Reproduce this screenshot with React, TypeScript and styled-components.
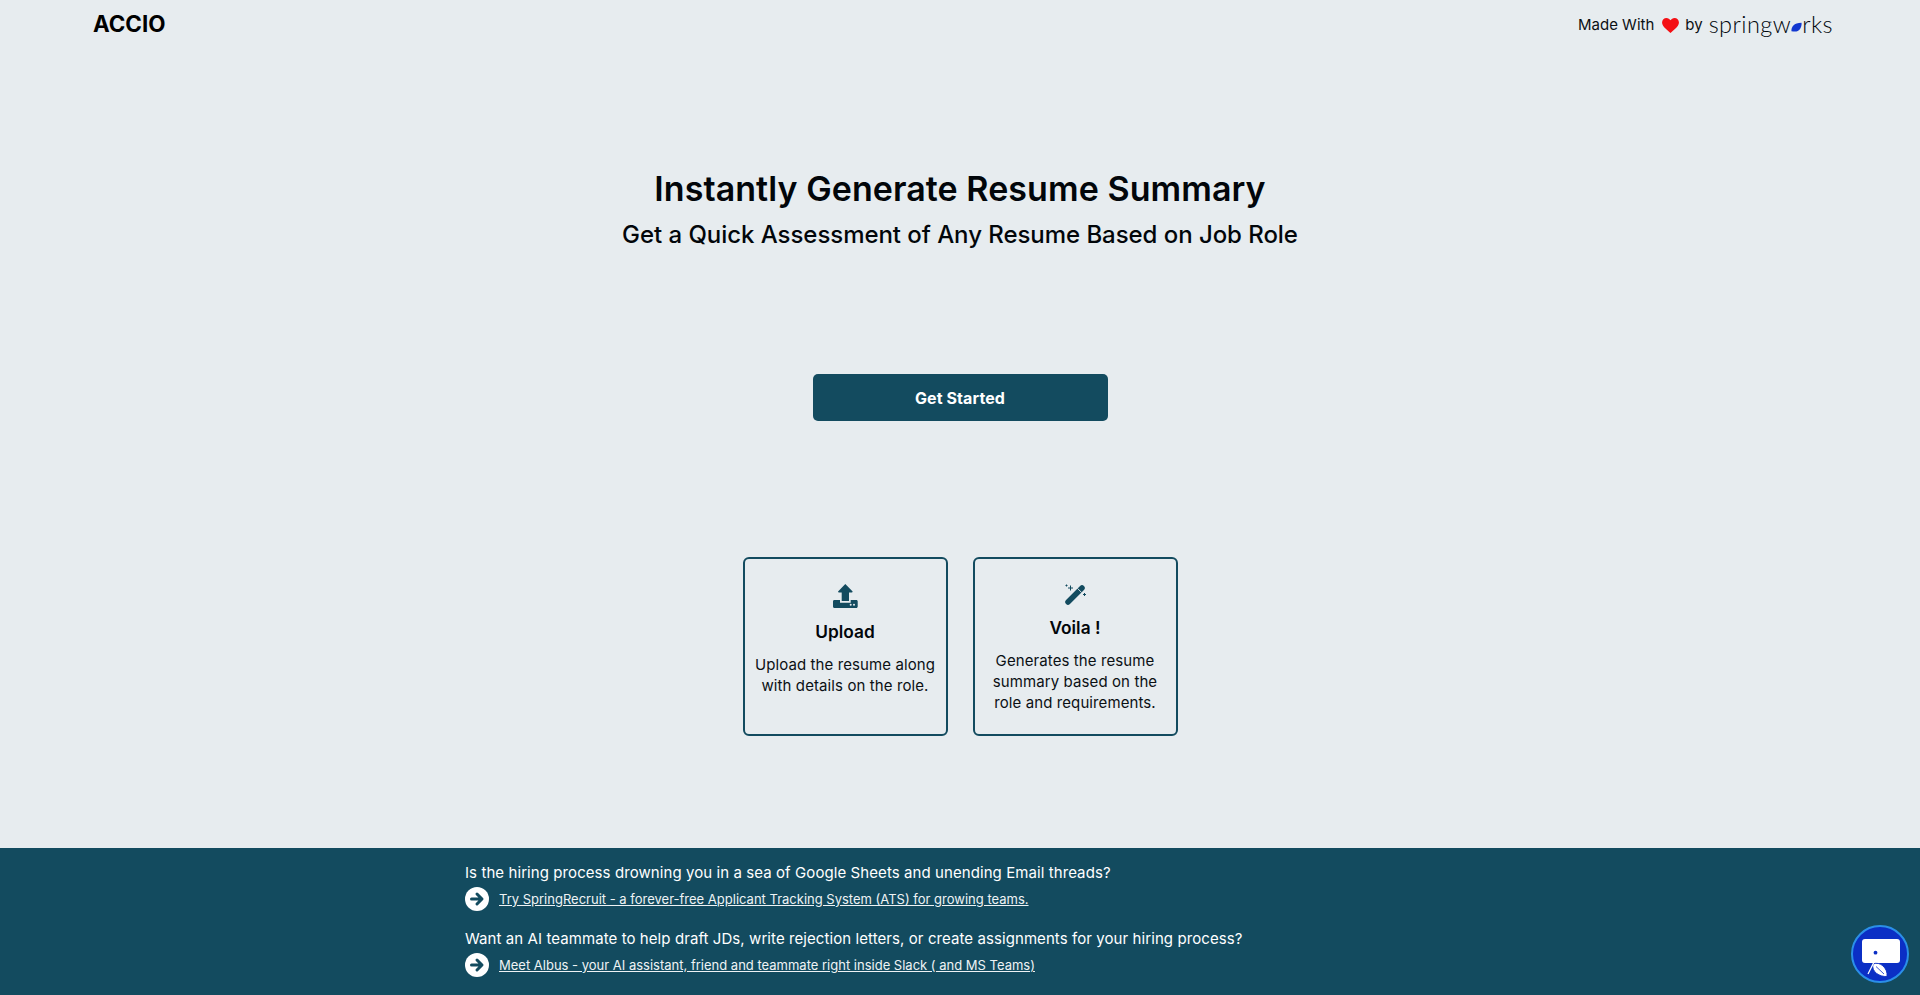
import React from "react";
import styled, { createGlobalStyle } from "styled-components";

const Global = createGlobalStyle`
  html, body { margin: 0; padding: 0; background: #e7ecef; }
  body { font-family: Inter, "Liberation Sans", sans-serif; color: #050a0d; }
  * { box-sizing: border-box; }
`;
const Page = styled.div`
  height: 995px; display: flex; flex-direction: column; overflow: hidden; position: relative;
`;
const Header = styled.header`
  height: 49px; padding: 0 87px 0 93px; display: flex; justify-content: space-between; align-items: flex-start;
`;
const Logo = styled.div`
  font-size: 22.4px; font-weight: 700; line-height: 27px; margin-top: 10px; color: #000;
`;
const Credit = styled.div`
  display: flex; align-items: center; font-size: 15px; line-height: 20px; margin-top: 14px; color: #0b1014;
`;
const Heart = styled.svg`
  width: 17px; height: 15px; margin: 1px 6px 0 8px; display: block;
`;
const Wordmark = styled.span`
  display: inline-flex; align-items: center; font-family: Lato, sans-serif; font-size: 23.500px; font-weight: 300; line-height: 24px; letter-spacing: 0.45px; color: #00060c; margin: -2px 0 0 6px;
`;
const Leaf = styled.svg`
  width: 11px; height: 10px; margin: 5px 0 0 0; display: block;
`;
const Main = styled.main`
  flex: 1; display: flex; flex-direction: column; align-items: center; padding-top: 117px;
`;
const Title = styled.h1`
  margin: 0; font-size: 34px; line-height: 46px; font-weight: 600; letter-spacing: 0.07px; color: #02060a;
`;
const Subtitle = styled.h2`
  margin: 3px 0 0; font-size: 24px; line-height: 40px; font-weight: 500; letter-spacing: -0.05px; color: #02060a;
`;
const Primary = styled.button`
  margin-top: 119px; width: 295px; height: 47px; border: 0; border-radius: 5px; background: #134b5f; color: #fff;
  font: 700 16px Inter, sans-serif; letter-spacing: 0.1px;
`;
const Cards = styled.div`
  margin-top: 136px; display: flex; gap: 25px;
`;
const Card = styled.section`
  width: 205px; height: 179px; border: 2px solid #134b5f; border-radius: 6px; padding: 25px 10px 0;
  display: flex; flex-direction: column; align-items: center; text-align: center;
`;
const UploadIcon = styled.svg`
  width: 25px; height: 24px; display: block;
`;
const WandIcon = styled.svg`
  width: 21px; height: 21px; display: block; margin-bottom: -1px;
`;
const CardTitle = styled.h3`
  margin: 12px 0 0; font-size: 17.300px; line-height: 24px; font-weight: 600; color: #02060a;
`;
const CardText = styled.p`
  margin: 10px 0 0; font-size: 15px; line-height: 21px; font-weight: 400; letter-spacing: 0.1px; color: #0b1014;
`;
const Footer = styled.footer`
  height: 147px; background: #134b5f; color: #fff; padding: 14px 0 0 465px; display: flex; flex-direction: column; gap: 17px;
`;
const Promo = styled.div`
  display: flex; flex-direction: column; gap: 3px;
`;
const Question = styled.div`
  font-size: 15px; line-height: 22px; font-weight: 400; letter-spacing: 0.08px;
`;
const LinkRow = styled.div`
  display: flex; align-items: center; gap: 10px; height: 24px;
`;
const ArrowDot = styled.svg`
  width: 24px; height: 24px; display: block;
`;
const PromoLink = styled.a`
  font-size: 13px; line-height: 20px; color: #eef3f5; text-decoration: underline;
`;
const ChatBubble = styled.div`
  position: absolute; right: 11px; bottom: 12px; width: 58px; height: 58px; border-radius: 50%; background: #0b2fc5;
  border: 2px solid #2b8fe8; box-shadow: inset 0 0 0 1px #0b2fc5; display: flex; align-items: center; justify-content: center;
`;
const ChatIcon = styled.svg`
  width: 46px; height: 46px; display: block;
`;

const Arrow = () => (
  <ArrowDot viewBox="0 0 24 24">
    <circle cx="12" cy="12" r="12" fill="#fff" />
    <path d="M6.500 12h10M12 7l5 5-5 5" fill="none" stroke="#134b5f" strokeWidth="3" strokeLinecap="round" strokeLinejoin="round" />
  </ArrowDot>
);

export default function App() {
  return (
    <Page>
      <Global />
      <Header>
        <Logo>ACCIO</Logo>
        <Credit>
          Made With
          <Heart viewBox="0 0 18 16">
            <path d="M9 16C6 13 0 9.500 0 4.800 0 2 2.100 0 4.700 0 6.500 0 8.100 1 9 2.500 9.900 1 11.500 0 13.300 0 15.900 0 18 2 18 4.800 18 9.500 12 13 9 16Z" fill="#f40f14" />
          </Heart>
          by
          <Wordmark>
            springw
            <Leaf viewBox="0 0 12 10">
              <path d="M0.500 9.700C0 5 3 0.300 11.500 0.300 12 6 8.500 10 4.500 10 3 10 1.700 10 0.500 9.700Z" fill="#1238d0" />
            </Leaf>
            rks
          </Wordmark>
        </Credit>
      </Header>
      <Main>
        <Title>Instantly Generate Resume Summary</Title>
        <Subtitle>Get a Quick Assessment of Any Resume Based on Job Role</Subtitle>
        <Primary>Get Started</Primary>
        <Cards>
          <Card>
            <UploadIcon viewBox="0 0 25 24">
              <path d="M12.300 0 19.400 7.300C19.900 7.900 19.600 8.500 18.800 8.500H16V17H8.700V8.500H5.900C5.100 8.500 4.800 7.900 5.300 7.300Z" fill="#134b5f" />
              <path d="M0 17.500C0 16.500 0.600 16 1.500 16H7V18.700H17.700V16H23.200C24.100 16 24.700 16.500 24.700 17.500V22.500C24.700 23.400 24.100 24 23.200 24H1.500C0.600 24 0 23.400 0 22.500Z" fill="#134b5f" />
              <circle cx="17.700" cy="20.800" r="1" fill="#e7ecef" />
              <circle cx="21" cy="20.800" r="1" fill="#e7ecef" />
            </UploadIcon>
            <CardTitle>Upload</CardTitle>
            <CardText>Upload the resume along with details on the role.</CardText>
          </Card>
          <Card>
            <WandIcon viewBox="0 0 21 21">
              <path d="M3 18 17 4" stroke="#134b5f" strokeWidth="5.500" strokeLinecap="round" fill="none" />
              <path d="M12.500 4.400 16.600 8.500" stroke="#e7ecef" strokeWidth="0.900" fill="none" />
              <path d="M5.500 1.500v5M3 4h5M1.500 0.500v2M0.500 1.500h2M19.500 9v3M18 10.500h3" stroke="#134b5f" strokeWidth="1" fill="none" />
            </WandIcon>
            <CardTitle>Voila !</CardTitle>
            <CardText>Generates the resume summary based on the role and requirements.</CardText>
          </Card>
        </Cards>
      </Main>
      <Footer>
        <Promo>
          <Question>Is the hiring process drowning you in a sea of Google Sheets and unending Email threads?</Question>
          <LinkRow>
            <Arrow />
            <PromoLink>Try SpringRecruit - a forever-free Applicant Tracking System (ATS) for growing teams.</PromoLink>
          </LinkRow>
        </Promo>
        <Promo>
          <Question>Want an AI teammate to help draft JDs, write rejection letters, or create assignments for your hiring process?</Question>
          <LinkRow>
            <Arrow />
            <PromoLink>Meet Albus - your AI assistant, friend and teammate right inside Slack ( and MS Teams)</PromoLink>
          </LinkRow>
        </Promo>
      </Footer>
      <ChatBubble>
        <ChatIcon viewBox="0 0 46 46">
          <rect x="5" y="8" width="38" height="24" rx="3" fill="#fff" />
          <circle cx="18.500" cy="21.700" r="1.900" fill="#0b2fc5" />
          <path d="M16 33C23 30 31 37 30 45.500 23 46 14 41 16 33Z" fill="#fff" stroke="#0b2fc5" strokeWidth="0.900" />
          <path d="M19 35.500 27 43" stroke="#0b2fc5" strokeWidth="0.800" />
          <path d="M11 43 17 31" stroke="#fff" strokeWidth="1.200" />
        </ChatIcon>
      </ChatBubble>
    </Page>
  );
}
